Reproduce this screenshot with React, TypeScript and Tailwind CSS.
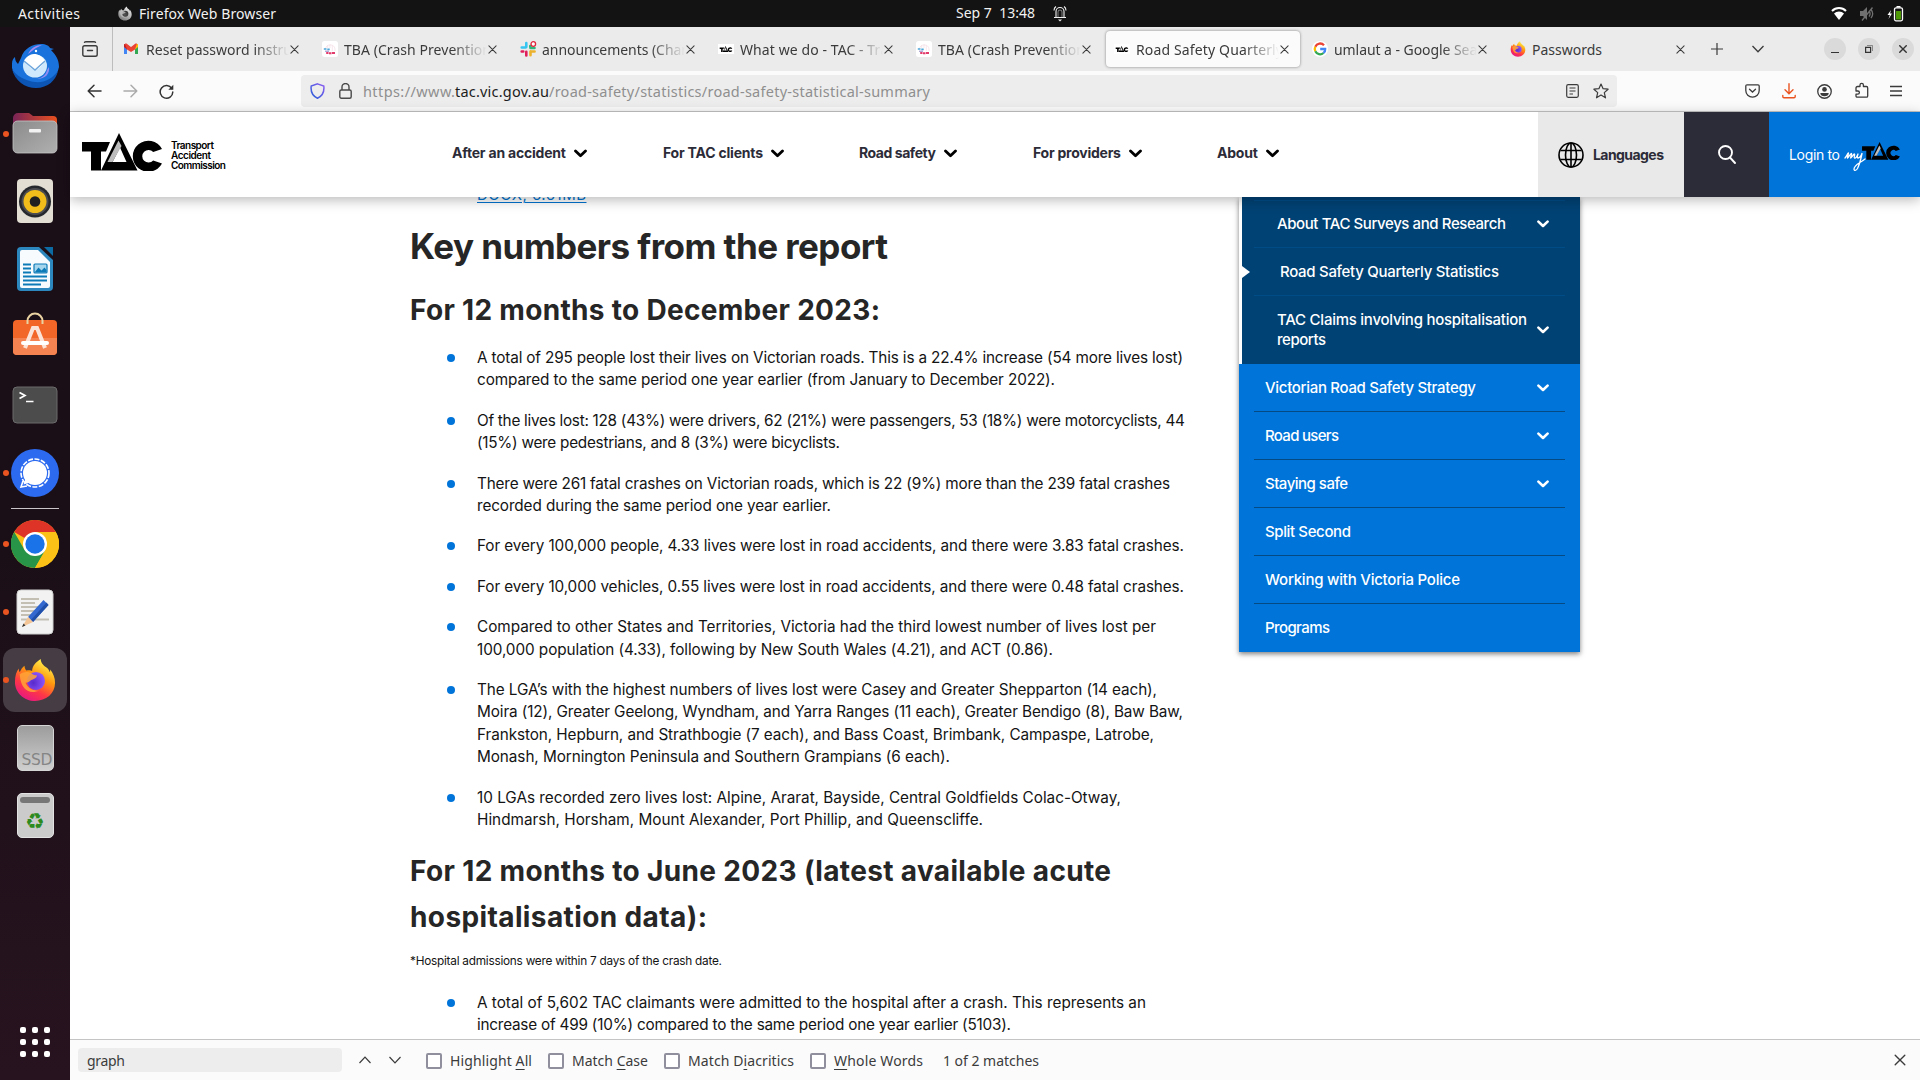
import { useLayoutEffect, useRef, useState } from 'react';
import type { ReactNode } from 'react';

/** Text run whose tracking is adjusted so that it fills `w` pixels. */
function Fit({ w, children, className = '' }: { w: number; children: ReactNode; className?: string }) {
  const ref = useRef<HTMLSpanElement>(null);
  const [ls, setLs] = useState(0);
  useLayoutEffect(() => {
    const el = ref.current;
    if (!el) return;
    const n = (el.textContent || '').length;
    setLs((w - el.getBoundingClientRect().width) / Math.max(1, n - 1));
  }, [w]);
  return (
    <span ref={ref} className={`inline-block whitespace-nowrap ${className}`} style={{ letterSpacing: `${ls}px`, marginRight: `${-ls}px` }}>
      {children}
    </span>
  );
}

type IconProps = { className?: string };

function Close({ className = '' }: IconProps) {
  return (
    <svg viewBox="0 0 10 10" className={`shrink-0 ${className}`} fill="none" stroke="currentColor" strokeWidth="1.15" strokeLinecap="round">
      <path d="M1 1l8 8M9 1l-8 8" />
    </svg>
  );
}

function Chev({ className = '' }: IconProps) {
  return (
    <svg viewBox="0 0 12 8" className={`shrink-0 ${className}`} fill="none" stroke="currentColor" strokeWidth="2.6" strokeLinecap="round" strokeLinejoin="round">
      <path d="M1.4 1.6L6 6l4.6-4.4" />
    </svg>
  );
}

function TacMark({ className = '' }: IconProps) {
  return (
    <svg viewBox="0 0 80 38" className={`shrink-0 ${className}`}>
      <path d="M0 9h28l-4 9.500h-5V37.500H9v-19H0z" fill="#000" />
      <path fillRule="evenodd" d="M37 0L55.500 37.500H19zM38 14.500l-7.500 14.500h14z" fill="#000" />
      <path d="M36.500 7.500l3 5.500-9 16h-5z" fill="#bdbdbd" />
      <path d="M80 16A15.500 15.500 0 1 0 80 30.500l-8.800-3a6.300 6.300 0 1 1 0-8.500z" fill="#000" />
    </svg>
  );
}

function FirefoxIcon({ className = '', mono = false }: IconProps & { mono?: boolean }) {
  const id = mono ? 'fm' : 'fc';
  return (
    <svg viewBox="0 0 44 46" className={`shrink-0 ${className}`}>
      <defs>
        <linearGradient id={`${id}a`} x1="0.8" y1="0" x2="0.25" y2="1">
          <stop offset="0.05" stopColor={mono ? '#e8e8e8' : '#fff44f'} />
          <stop offset="0.4" stopColor={mono ? '#c4c4c4' : '#ff980e'} />
          <stop offset="0.7" stopColor={mono ? '#a0a0a0' : '#ff3647'} />
          <stop offset="1" stopColor={mono ? '#777' : '#e31587'} />
        </linearGradient>
        <radialGradient id={`${id}b`} cx="0.35" cy="0.6" r="0.7">
          <stop offset="0" stopColor={mono ? '#555' : '#592acb'} />
          <stop offset="1" stopColor={mono ? '#333' : '#9059ff'} />
        </radialGradient>
      </defs>
      <path d="M28 1c0 4 3 7 6 9 2 1.500 3 3 3.500 5 .4-1 .5-2 .5-3 3 4 5 8.500 5 14 0 11.500-9.500 19-21 19S1 36 1 25c0-6 1.500-11 4-14 0 2 .5 3 1 4 1-3 3-5.500 5-7 0 2 1 4 2 5 3-.5 5 0 6 .5 0-5 4-9.500 9-12.500z" fill={`url(#${id}a)`} />
      <circle cx="23" cy="24" r="9.5" fill={`url(#${id}b)`} />
      <path d="M6 17c4-3 9-3 12-1 2 2 4 2 6 2 0 3-3 4-6 5-1 1-3 3-6 3 2 5 8 9 14 8-8 4-19 1-20-17z" fill={mono ? '#bbb' : '#ffa436'} opacity=".85" />
    </svg>
  );
}

function GmailIcon() {
  return (
    <svg viewBox="0 0 14 12" className="h-3 w-3.5">
      <path d="M0 1.500V11h3V5z" fill="#4285f4" />
      <path d="M14 1.500V11h-3V5z" fill="#34a853" />
      <path d="M11 1.500L14 1v3l-3 2.500z" fill="#fbbc04" />
      <path d="M0 1l3 .5V6.500L0 4z" fill="#c5221f" />
      <path d="M1 .5h1.500L7 4 11.500.5H13L11 6.500H11L7 9 3 6.500z" fill="#ea4335" />
    </svg>
  );
}

function TbaIcon() {
  return (
    <svg viewBox="0 0 16 16" className="size-4">
      <rect width="16" height="16" rx="2.500" fill="#fff" />
      <path d="M3.500 8a4.800 4.800 0 0 1 9.500 0v2M8 3.500V7M5.700 4.500V7M10.300 4.500V10" fill="none" stroke="#f3dbe4" strokeWidth=".7" />
      <path d="M1.800 8h2.700M5.300 8.300h2.400" fill="none" stroke="#4aa5d8" strokeWidth="1.700" />
      <path d="M3 10.200h4" fill="none" stroke="#8d86c4" strokeWidth="1" />
      <path d="M4.200 12h2.300M7 12.200h2.500M10 12h3" fill="none" stroke="#e23a6b" strokeWidth="2" />
    </svg>
  );
}

function SlackIcon() {
  return (
    <svg viewBox="0 0 17 16" className="h-4 w-[17px]">
      <g strokeWidth="2.600" strokeLinecap="round">
        <path d="M6.300 2v4M1.700 6.500h4" stroke="#36c5f0" />
        <path d="M10.300 6v-1M10.500 7h4" stroke="#2eb67d" />
        <path d="M10.500 10.500v3.800M10.600 10.500h4" stroke="#ecb22e" />
        <path d="M6.300 10.700v3.700M1.700 10.500h1.600" stroke="#e01e5a" />
      </g>
      <circle cx="13.300" cy="3" r="2.300" fill="#fff" stroke="#e0263c" strokeWidth="1.300" />
    </svg>
  );
}

function GoogleIcon() {
  return (
    <svg viewBox="0 0 16 16" className="size-4">
      <circle cx="8" cy="8" r="8" fill="#fff" />
      <g fill="none" strokeWidth="2.300">
        <path d="M12 4.200A5.300 5.300 0 0 0 3.300 5.700" stroke="#ea4335" />
        <path d="M3.300 5.700a5.300 5.300 0 0 0 0 4.600" stroke="#fbbc05" />
        <path d="M3.300 10.300a5.300 5.300 0 0 0 8.200 1.700" stroke="#34a853" />
        <path d="M11.500 12A5 5 0 0 0 13.200 8H8.200" stroke="#4285f4" />
      </g>
    </svg>
  );
}

function TacFav() {
  return (
    <span className="flex h-2.5 w-4 items-center justify-center bg-white">
      <TacMark className="h-1.5 w-3.5" />
    </span>
  );
}

const tabs: { icon: ReactNode; text: string; w: number; active?: boolean; short?: boolean }[] = [
  { icon: <GmailIcon />, text: 'Reset password instru', w: 146 },
  { icon: <TbaIcon />, text: 'TBA (Crash Prevention', w: 147 },
  { icon: <SlackIcon />, text: 'announcements (Chan', w: 148 },
  { icon: <TacFav />, text: 'What we do - TAC - Tra', w: 148 },
  { icon: <TbaIcon />, text: 'TBA (Crash Prevention', w: 147 },
  { icon: <TacFav />, text: 'Road Safety Quarterly', w: 147, active: true },
  { icon: <GoogleIcon />, text: 'umlaut a - Google Sear', w: 149 },
  { icon: <FirefoxIcon className="size-4" />, text: 'Passwords', w: 70, short: true },
];

function TopBar() {
  return (
    <div className="flex h-[27px] shrink-0 items-center bg-[#131313] pl-[18px] pr-4 text-sm text-[#f2f2f2]">
      <div className="flex w-[938px] items-center">
        <Fit w={62}>Activities</Fit>
        <FirefoxIcon mono className="ml-[38px] mr-[7px] h-[15px] w-3.5" />
        <Fit w={137}>Firefox Web Browser</Fit>
      </div>
      <Fit w={79} className="-mt-px whitespace-pre">{'Sep 7  13:48'}</Fit>
      <svg viewBox="0 0 14 17" className="ml-[18px] h-[17px] w-3.5" fill="none" stroke="#f2f2f2" strokeWidth="1.1">
        <path d="M1 12.500h12M3 12V6.500a4 4 0 0 1 8 0V12M3 1.500C1.800 2.300 1 3.500 1 5.500M11 1.500c1.200.8 2 2 2 4" />
        <path d="M5 12V7a2 2 0 0 1 4 0v5" strokeWidth=".5" />
        <path d="M5 14.500h4l-2 2z" fill="#f2f2f2" stroke="none" />
      </svg>
      <div className="ml-auto flex items-center gap-3">
        <svg viewBox="0 0 16 13" className="h-[13px] w-4">
          <path d="M8 13L3 6.500a7 7 0 0 1 10 0z" fill="#fff" />
          <path d="M1 4a9.800 9.800 0 0 1 14 0" fill="none" stroke="#fff" strokeWidth="2" />
        </svg>
        <svg viewBox="0 0 16 15" className="h-[15px] w-4" fill="none" stroke="#707070" strokeWidth="1.300">
          <path d="M1 5h3l4-4v13l-4-4H1z" fill="#707070" stroke="none" />
          <path d="M10 5c1.200 1.500 1.200 4 0 5.500M12 3.500c2 2.500 2 6 0 8.500M13.500 1.500L3 14.500" />
        </svg>
        <svg viewBox="0 0 17 16" className="h-4 w-[17px]">
          <path d="M4 4L.5 9h2.300L1.500 13 5 7.500H3z" fill="#fff" />
          <rect x="7.500" y="1.800" width="8" height="13" rx="1.500" fill="none" stroke="#fff" strokeWidth="1.300" />
          <path d="M9.500 0h4v1.500h-4z" fill="#fff" />
          <path d="M9 5h5v8.500H9z" fill="#4e9a06" />
        </svg>
      </div>
    </div>
  );
}

function TabBar() {
  return (
    <div className="flex h-11 shrink-0 items-center bg-[#ebebeb] text-sm text-[#3b3b3b]">
      <div className="flex h-full w-[43px] shrink-0 items-center border-r border-[#bdbdbd] pl-3">
        <svg viewBox="0 0 16 16" className="size-4" fill="none" stroke="#3b3b3b" strokeWidth="1.400" strokeLinecap="round">
          <rect x=".8" y="4.800" width="14.400" height="10.400" rx="1.800" />
          <path d="M2.500 1.200C3 .8 3.200.8 4 .8h8c.8 0 1 0 1.500.4M5.500 9.500h5" />
        </svg>
      </div>
      <div className="-ml-px flex shrink-0 items-center gap-1 pl-1">
        {tabs.map((t, i) => (
          <div
            key={i}
            className={
              t.active
                ? 'flex h-9 w-[194px] items-center rounded bg-[#fbfbfb] pl-2 shadow-[0_0_3px_rgba(0,0,0,0.45)]'
                : 'flex h-9 w-[194px] items-center rounded pl-2'
            }
          >
            <span className="flex w-[22px] items-center">{t.icon}</span>
            <span
              className={
                t.short
                  ? 'w-[143px] overflow-hidden pt-0.5'
                  : 'w-[143px] overflow-hidden pt-0.5 [mask-image:linear-gradient(to_right,#000_108px,transparent_143px)]'
              }
            >
              <Fit w={t.w}>{t.text}</Fit>
            </span>
            <Close className="ml-px size-[9px]" />
          </div>
        ))}
      </div>
      <svg viewBox="0 0 12 12" className="ml-[15px] size-3 shrink-0" stroke="#3b3b3b" strokeWidth="1.200">
        <path d="M6 0v12M0 6h12" />
      </svg>
      <svg viewBox="0 0 12 8" className="ml-[29px] h-2 w-3 shrink-0" fill="none" stroke="#3b3b3b" strokeWidth="1.300">
        <path d="M.5 1L6 6.800 11.500 1" />
      </svg>
      <div className="ml-auto flex gap-3 pr-1.5">
        <span className="flex size-[22px] items-center justify-center rounded-full bg-[#dadada]">
          <span className="mt-1.5 h-px w-2 bg-[#333]" />
        </span>
        <span className="flex size-[22px] items-center justify-center rounded-full bg-[#dadada]">
          <svg viewBox="0 0 8 8" className="size-2" fill="none" stroke="#333">
            <path d="M.6 2.400h5v5h-5z" strokeWidth="1.200" />
            <path d="M2 .5h5.500V6" strokeWidth=".8" opacity=".6" />
          </svg>
        </span>
        <span className="flex size-[22px] items-center justify-center rounded-full bg-[#dadada] text-[#333]">
          <svg viewBox="0 0 8 8" className="size-2" stroke="#333" strokeWidth="1.400">
            <path d="M.3.3l7.400 7.400M7.700.3L.3 7.700" />
          </svg>
        </span>
      </div>
    </div>
  );
}

function Toolbar() {
  return (
    <div className="flex h-[41px] shrink-0 items-center border-b border-[#c4c4c4] bg-[#fbfbfb] text-[#3b3b3b]">
      <div className="flex w-[231px] shrink-0 items-center gap-[21px] pl-[17px]">
        <svg viewBox="0 0 15 14" className="h-3.5 w-[15px]" fill="none" stroke="#333" strokeWidth="1.500" strokeLinecap="round" strokeLinejoin="round">
          <path d="M14 7H1.500M7 1.200L1.200 7 7 12.800" />
        </svg>
        <svg viewBox="0 0 15 14" className="h-3.5 w-[15px]" fill="none" stroke="#ababab" strokeWidth="1.500" strokeLinecap="round" strokeLinejoin="round">
          <path d="M1 7h12.500M8 1.200L13.800 7 8 12.800" />
        </svg>
        <svg viewBox="0 0 15 15" className="size-[15px]" fill="none" stroke="#333" strokeWidth="1.500" strokeLinecap="round">
          <path d="M12.800 4.500A6.300 6.300 0 1 0 13.800 8" />
          <path d="M14.300.8v5h-5z" fill="#333" stroke="none" />
        </svg>
      </div>
      <div className="flex h-8 w-[1316px] shrink-0 items-center rounded bg-[#ededed] pl-[9px] pr-2">
        <svg viewBox="0 0 15 16" className="h-4 w-[15px]" fill="none" strokeWidth="1.500">
          <defs>
            <linearGradient id="sh" x1="0" y1="1" x2="1" y2="0">
              <stop offset="0" stopColor="#2a60d8" />
              <stop offset="1" stopColor="#8a5cf0" />
            </linearGradient>
          </defs>
          <path d="M7.500.9L13.800 3c.6 5-1.500 10-6.300 12.200C2.700 13 .6 8 1.200 3z" stroke="url(#sh)" />
        </svg>
        <svg viewBox="0 0 13 16" className="ml-[14px] h-4 w-[13px]" fill="none" stroke="#4a4a4a" strokeWidth="1.400">
          <rect x=".8" y="7" width="11.400" height="8.200" rx="1.500" />
          <path d="M3 7V4a3.500 3.500 0 0 1 7 0v3" />
        </svg>
        <span className="ml-[11px] mt-0.5 flex text-[14.5px] text-[#8f8f8f]">
          <Fit w={92}>https://www.</Fit>
          <Fit w={94} className="text-[#1c1c1c]">tac.vic.gov.au</Fit>
          <Fit w={381}>/road-safety/statistics/road-safety-statistical-summary</Fit>
        </span>
        <svg viewBox="0 0 13 14" className="ml-auto h-3.5 w-[13px]" fill="none" stroke="#3b3b3b" strokeWidth="1.200">
          <rect x=".7" y=".7" width="11.600" height="12.600" rx="1.500" />
          <path d="M3.500 4h6M3.500 7h6M3.500 10h3.500" />
        </svg>
        <svg viewBox="0 0 16 16" className="ml-[14px] size-4" fill="none" stroke="#3b3b3b" strokeWidth="1.200" strokeLinejoin="round">
          <path d="M8 1l2.100 4.700 5 .5-3.800 3.400 1.200 5.200L8 12.100l-4.500 2.700 1.200-5.200L.9 6.200l5-.5z" />
        </svg>
      </div>
      <div className="ml-auto flex items-center gap-[21.500px] pr-[18px]">
        <svg viewBox="0 0 15 14" className="h-3.5 w-[15px]" fill="none" stroke="#3b3b3b" strokeWidth="1.300" strokeLinecap="round">
          <path d="M2 .8h11c.8 0 1.200.4 1.200 1.200v4.500a6.700 6.700 0 0 1-13.400 0V2C.8 1.200 1.200.8 2 .8zM4.500 5.300l3 2.800 3-2.800" />
        </svg>
        <svg viewBox="0 0 14 16" className="h-4 w-3.5" fill="none" stroke="#ea5420" strokeWidth="1.400" strokeLinecap="round">
          <path d="M7 .8v9.700M3 6.800l4 3.900 4-3.900M.8 12.500v1c0 .8.400 1.200 1.200 1.200h10c.8 0 1.200-.4 1.200-1.200v-1" />
        </svg>
        <svg viewBox="0 0 16 16" className="size-[15px]">
          <circle cx="8" cy="8" r="7.200" fill="none" stroke="#3b3b3b" strokeWidth="1.400" />
          <circle cx="8" cy="5.800" r="2.500" fill="#3b3b3b" />
          <path d="M3.500 9.500h9c0 2.200-2 3.500-4.500 3.500S3.500 11.700 3.500 9.500z" fill="#3b3b3b" />
        </svg>
        <svg viewBox="0 0 15 16" className="-mt-0.5 h-4 w-[15px]" fill="none" stroke="#3b3b3b" strokeWidth="1.300" strokeLinejoin="round">
          <path d="M2 8V6c0-1 .5-1.500 1.500-1.500H6V3a1.700 1.700 0 0 1 3.400 0v1.500h3c.8 0 1.300.5 1.300 1.500v8c0 .8-.5 1.200-1.300 1.200H3.500c-1 0-1.500-.4-1.500-1.200v-1.800h1.800a1.600 1.600 0 0 0 0-3.200H2z" />
        </svg>
        <svg viewBox="0 0 12 12" className="size-3" stroke="#3b3b3b" strokeWidth="1.400">
          <path d="M0 1.500h12M0 6h12M0 10.500h12" />
        </svg>
      </div>
    </div>
  );
}

function NavItem({ text, w }: { text: string; w: number }) {
  return (
    <div className="flex items-center gap-2">
      <Fit w={w}>{text}</Fit>
      <Chev className="h-[9px] w-[13px] text-black" />
    </div>
  );
}

function SiteHeader() {
  return (
    <header className="relative z-10 flex h-[85px] shrink-0 items-center bg-white pl-3 font-[Inter,sans-serif] text-sm font-bold text-[#2c2c38] shadow-[0_3px_12px_rgba(0,0,0,0.28)]">
      <TacMark className="mt-[-5px] h-[38px] w-20" />
      <div className="ml-[9px] mt-px flex w-[281px] flex-col text-[10px] font-semibold leading-[10.3px] text-black">
        <Fit w={43} className="self-start">Transport</Fit>
        <Fit w={40} className="self-start">Accident</Fit>
        <Fit w={55} className="self-start">Commission</Fit>
      </div>
      <div className="mt-[-3px] flex items-center gap-[76px]">
        <NavItem text="After an accident" w={114} />
        <NavItem text="For TAC clients" w={100} />
        <div className="-ml-px"><NavItem text="Road safety" w={77} /></div>
        <NavItem text="For providers" w={88} />
        <div className="-ml-px"><NavItem text="About" w={41} /></div>
      </div>
      <div className="ml-auto flex h-full w-[146px] items-center bg-[#e9e9e9] pl-5">
        <svg viewBox="0 0 26 26" className="size-[26px]" fill="none" stroke="#000" strokeWidth="1.600">
          <circle cx="13" cy="13" r="12" />
          <ellipse cx="13" cy="13" rx="5.500" ry="12" />
          <path d="M13 1v24M2.500 8.500h21M2.500 17.500h21" />
        </svg>
        <Fit w={71} className="ml-[9px]">Languages</Fit>
      </div>
      <div className="flex h-full w-[85px] items-center justify-center bg-[#2c2c38]">
        <svg viewBox="0 0 18 19" className="h-[19px] w-[18px]" fill="none" stroke="#fff" strokeWidth="1.900" strokeLinecap="round">
          <circle cx="7.500" cy="7.500" r="6.500" />
          <path d="M12 12.500l5 5.500" />
        </svg>
      </div>
      <div className="flex h-full w-[151px] items-center bg-[#0074d9] pl-5 font-normal text-white">
        <Fit w={51} className="mt-px">Login to</Fit>
        <svg viewBox="0 0 22 22" className="-mr-1 ml-1 mt-3 h-[22px] w-[22px]" fill="none" stroke="#fff" strokeWidth="1.300" strokeLinecap="round" strokeLinejoin="round">
          <path d="M1 8C3 6 4 2.500 4.500 3c.4.500-1.300 3.500-1 5C5 6.500 6.500 3.500 7.500 3.500c.8.500-1 3-.8 4.500C8 7 9.500 4 10.500 4c.8.500-1 3.500 0 4 1.200.3 2.500-1.500 3.500-4-.8 2-1 4 0 4 1.500 0 3-2 4-4.500-1 5-2.500 11-4.500 15-1.500 2.500-3.500 2.500-3.500.5 0-4 6-6 11-10" />
        </svg>
        <TacMark className="-mt-2 h-[18px] w-[38px]" />
      </div>
    </header>
  );
}

const findings: [string, number][][] = [
  [
    ['A total of 295 people lost their lives on Victorian roads. This is a 22.4% increase (54 more lives lost)', 706],
    ['compared to the same period one year earlier (from January to December 2022).', 578],
  ],
  [
    ['Of the lives lost: 128 (43%) were drivers, 62 (21%) were passengers, 53 (18%) were motorcyclists, 44', 708],
    ['(15%) were pedestrians, and 8 (3%) were bicyclists.', 363],
  ],
  [
    ['There were 261 fatal crashes on Victorian roads, which is 22 (9%) more than the 239 fatal crashes', 693],
    ['recorded during the same period one year earlier.', 354],
  ],
  [['For every 100,000 people, 4.33 lives were lost in road accidents, and there were 3.83 fatal crashes.', 707]],
  [['For every 10,000 vehicles, 0.55 lives were lost in road accidents, and there were 0.48 fatal crashes.', 707]],
  [
    ['Compared to other States and Territories, Victoria had the third lowest number of lives lost per', 679],
    ['100,000 population (4.33), following by New South Wales (4.21), and ACT (0.86).', 576],
  ],
  [
    ['The LGA’s with the highest numbers of lives lost were Casey and Greater Shepparton (14 each),', 680],
    ['Moira (12), Greater Geelong, Wyndham, and Yarra Ranges (11 each), Greater Bendigo (8), Baw Baw,', 706],
    ['Frankston, Hepburn, and Strathbogie (7 each), and Bass Coast, Brimbank, Campaspe, Latrobe,', 677],
    ['Monash, Mornington Peninsula and Southern Grampians (6 each).', 473],
  ],
  [
    ['10 LGAs recorded zero lives lost: Alpine, Ararat, Bayside, Central Goldfields Colac-Otway,', 644],
    ['Hindmarsh, Horsham, Mount Alexander, Port Phillip, and Queenscliffe.', 506],
  ],
];

const hospital: [string, number][][] = [
  [
    ['A total of 5,602 TAC claimants were admitted to the hospital after a crash. This represents an', 669],
    ['increase of 499 (10%) compared to the same period one year earlier (5103).', 534],
  ],
];

function Bullets({ items }: { items: [string, number][][] }) {
  return (
    <ul className="flex flex-col gap-[18px] text-[15.300px] leading-[22.4px] text-[#141414]">
      {items.map((lines, i) => (
        <li key={i} className="flex pl-[37px]">
          <span className="mr-[22px] mt-[7px] size-2 shrink-0 rounded-full bg-[#0074d9]" />
          <div className="flex flex-col items-start">
            {lines.map(([t, w]) => (
              <Fit key={t} w={w}>{t}</Fit>
            ))}
          </div>
        </li>
      ))}
    </ul>
  );
}

function Article() {
  return (
    <article className="flex w-[829px] shrink-0 flex-col items-start text-[#262626]">
      <a className="-mt-[13px] ml-[67px] text-[15px] leading-[22px] text-[#0072ce]">
        <Fit w={109} className="underline decoration-1 underline-offset-2">DOCX, 6.61MB</Fit>
      </a>
      <h2 className="mt-[17px] text-[35px] font-bold leading-[46px]">
        <Fit w={478}>Key numbers from the report</Fit>
      </h2>
      <h3 className="mb-[14px] mt-[18px] text-[28px] font-bold leading-[46px]">
        <Fit w={470}>For 12 months to December 2023:</Fit>
      </h3>
      <Bullets items={findings} />
      <h3 className="mt-4 flex flex-col items-start text-[28px] font-bold leading-[46px]">
        <Fit w={701}>For 12 months to June 2023 (latest available acute</Fit>
        <Fit w={297}>hospitalisation data):</Fit>
      </h3>
      <p className="mb-[20px] mt-[10px] text-[11.8px] leading-[22px] text-[#141414]">
        <Fit w={312}>*Hospital admissions were within 7 days of the crash date.</Fit>
      </p>
      <Bullets items={hospital} />
    </article>
  );
}

const blueItems: [string, number, boolean][] = [
  ['Victorian Road Safety Strategy', 211, true],
  ['Road users', 74, true],
  ['Staying safe', 83, true],
  ['Split Second', 86, false],
  ['Working with Victoria Police', 195, false],
  ['Programs', 65, false],
];

function Sidebar() {
  return (
    <aside className="h-[455px] w-[341px] shrink-0 text-[15px] font-medium leading-5 text-white shadow-[0_2px_5px_rgba(0,0,0,0.5)]">
      <div className="border-l-[3px] border-white bg-[#004274]">
        <div className="ml-3 mr-[15px] h-1 border-b border-[#004c87]" />
        <div className="ml-3 mr-[15px] flex h-[47px] items-center justify-between border-b border-[#004c87] pl-[23px] pr-4">
          <Fit w={229}>About TAC Surveys and Research</Fit>
          <Chev className="h-2 w-3" />
        </div>
        <div className="flex h-12 items-center">
          <span className="h-0 w-0 border-y-[6px] border-l-8 border-y-transparent border-l-white" />
          <div className="ml-1 mr-[15px] flex h-full flex-1 items-center border-b border-[#004c87] pl-[26px]">
            <Fit w={219}>Road Safety Quarterly Statistics</Fit>
          </div>
        </div>
        <div className="ml-3 mr-[15px] flex h-[68px] items-center justify-between pb-px pl-[23px] pr-4">
          <div className="flex flex-col items-start">
            <Fit w={250}>TAC Claims involving hospitalisation</Fit>
            <Fit w={49}>reports</Fit>
          </div>
          <Chev className="h-2 w-3" />
        </div>
      </div>
      <div className="bg-[#0074d9] pl-[15px] pr-[15px]">
        {blueItems.map(([t, w, c], i) => (
          <div
            key={t}
            className={
              i < 5
                ? 'flex h-12 items-center justify-between border-b border-[#064a84] pl-[11px] pr-4'
                : 'flex h-12 items-center justify-between pl-[11px] pr-4'
            }
          >
            <Fit w={w}>{t}</Fit>
            {c && <Chev className="h-2 w-3" />}
          </div>
        ))}
      </div>
    </aside>
  );
}

function Check({ before = '', u, after, w }: { before?: string; u: string; after: string; w: number }) {
  return (
    <label className="flex items-center gap-2">
      <span className="size-4 rounded-[2px] border-2 border-[#8f8f9d] bg-white" />
      <Fit w={w}>
        {before}
        <span className="underline underline-offset-[3px]">{u}</span>
        {after}
      </Fit>
    </label>
  );
}

function FindBar() {
  return (
    <div className="flex h-[41px] shrink-0 items-center border-t border-[#c4c4c4] bg-[#fbfbfb] pl-2 pr-3.5 text-sm text-[#3b3b3b]">
      <div className="flex h-6 w-[264px] items-center rounded bg-[#ededed] pl-[9px] pt-px">
        <Fit w={38}>graph</Fit>
      </div>
      <svg viewBox="0 0 12 8" className="ml-[17px] h-2 w-3" fill="none" stroke="#3b3b3b" strokeWidth="1.200">
        <path d="M.5 7L6 1.200 11.500 7" />
      </svg>
      <svg viewBox="0 0 12 8" className="ml-[18px] mr-[25px] h-2 w-3" fill="none" stroke="#3b3b3b" strokeWidth="1.200">
        <path d="M.5 1L6 6.800 11.500 1" />
      </svg>
      <div className="flex items-center gap-4 pt-px">
        <Check before="Highlight " u="A" after="ll" w={82} />
        <Check before="Match " u="C" after="ase" w={76} />
        <Check before="Match D" u="i" after="acritics" w={106} />
        <Check u="W" after="hole Words" w={89} />
      </div>
      <Fit w={96} className="ml-5 mt-px">1 of 2 matches</Fit>
      <Close className="ml-auto size-3" />
    </div>
  );
}

function ThunderbirdIcon() {
  return (
    <svg viewBox="0 0 48 48" className="size-12">
      <path d="M1 22c0-4 1.500-6 3-7 0 3 1 5 3 7l3-6C13 6 22 2 30 2c5 0 8 2 9 4l4 1-3 1c5 5 8 10 8 17A24 23 0 0 1 1 26z" fill="#1a73dc" />
      <path d="M17 12c3-6 8-9 14-9l-6 3c-3 2-5 4-8 6z" fill="#a78bf0" />
      <path d="M1 27c3 12 13 19 24 19 12 0 20-8 22-17-6 8-14 12-23 11S5 34 1 27z" fill="#0c55b5" />
      <ellipse cx="24" cy="24" rx="12" ry="11.500" fill="#cfe8fb" />
      <path d="M13 19c4 5 7 8 11 9 4-1 7-4 10-9-3-5-7-7-11-7s-8 3-10 7z" fill="#fff" />
      <path d="M13 19l11 9 10-9" fill="none" stroke="#6ea6dc" strokeWidth="1.400" />
      <circle cx="25" cy="9" r="1.200" fill="#fff" />
      <path d="M36 28c-1 5-5 8-10 9 8 0 13-5 12-12z" fill="#8f8df2" />
    </svg>
  );
}

function FilesIcon() {
  return (
    <svg viewBox="0 0 46 42" className="-mt-0.5 h-[42px] w-[46px]">
      <defs>
        <linearGradient id="fl"><stop stopColor="#7a2457" /><stop offset="1" stopColor="#e9501f" /></linearGradient>
        <linearGradient id="fg" x2="1" y2="1"><stop stopColor="#8b8b8b" /><stop offset="1" stopColor="#b0b0b0" /></linearGradient>
      </defs>
      <path d="M1 6a5 5 0 0 1 5-5h11l4 3h20a4 4 0 0 1 4 4v12H1z" fill="url(#fl)" />
      <rect x="1" y="9" width="44" height="32" rx="4.500" fill="url(#fg)" stroke="#c6c6c6" strokeWidth=".8" />
      <rect x="17" y="17" width="12" height="3.500" rx="1" fill="#f2f2f2" />
    </svg>
  );
}

function RhythmboxIcon() {
  return (
    <svg viewBox="0 0 38 46" className="h-[46px] w-[38px]">
      <rect x="1" y="1" width="36" height="44" rx="4" fill="#e2ded3" />
      <circle cx="19" cy="23.500" r="16" fill="#25282d" />
      <circle cx="19" cy="23.500" r="13.500" fill="#4b4d50" />
      <circle cx="19" cy="23.500" r="11.500" fill="#f0bd1b" />
      <circle cx="19" cy="23.500" r="5.300" fill="#202020" />
    </svg>
  );
}

function WriterIcon() {
  return (
    <svg viewBox="0 0 38 46" className="h-[46px] w-[38px]">
      <path d="M5 1h18l14 13v27a4 4 0 0 1-4 4H5a4 4 0 0 1-4-4V5a4 4 0 0 1 4-4z" fill="#2b87bd" />
      <path d="M6 4h16l12 12v24a2 2 0 0 1-2 2H6a2 2 0 0 1-2-2V6a2 2 0 0 1 2-2z" fill="#f7fbfd" />
      <path d="M28 1h9v9z" fill="#0d6ba3" />
      <path d="M7 18.500h8M7 22.500h8M7 26.500h8M7 30.500h24M7 34.500h24M7 38.500h18" stroke="#0d7ab8" strokeWidth="1.900" />
      <rect x="18" y="18" width="13" height="9" rx="1" fill="#a6d5ee" stroke="#0d7ab8" strokeWidth="1.200" />
      <path d="M18.500 26.500l4-5 3 3 3-3 2 2.500v2.500z" fill="#0d7ab8" />
    </svg>
  );
}

function SoftwareIcon() {
  return (
    <svg viewBox="0 0 46 44" className="-mt-1.5 h-11 w-[46px]">
      <path d="M15.500 12V9a7.500 7.500 0 0 1 15 0v3" fill="none" stroke="#ead3a3" strokeWidth="2" />
      <rect x="1" y="8" width="44" height="35" rx="4" fill="#f26627" />
      <path d="M1 26h44v13a4 4 0 0 1-4 4H5a4 4 0 0 1-4-4z" fill="#f58352" />
      <path d="M13 36l8-20h4l8 20" fill="none" stroke="#fbe3d8" strokeWidth="4" />
      <path d="M11 31h24" fill="none" stroke="#fff" strokeWidth="4" strokeLinecap="round" />
      <path d="M15.500 8v4M30.500 8v4" stroke="#ead3a3" strokeWidth="2" />
    </svg>
  );
}

function TerminalIcon() {
  return (
    <svg viewBox="0 0 46 38" className="h-[38px] w-[46px]">
      <rect x="1" y="1" width="44" height="36" rx="4" fill="#4c4c4c" stroke="#6b6b6b" />
      <path d="M7.500 6.500l5.500 3-5.500 3M14 15.500h7.500" fill="none" stroke="#fff" strokeWidth="1.700" />
    </svg>
  );
}

function SignalIcon() {
  return (
    <svg viewBox="0 0 48 48" className="size-12">
      <circle cx="24" cy="24" r="24" fill="#2c6bf0" />
      <circle cx="24" cy="24" r="14" fill="none" stroke="#fff" strokeWidth="1.600" strokeDasharray="5 1.500" />
      <path d="M12 32l-2 6 6-1" fill="none" stroke="#fff" strokeWidth="1.600" />
      <circle cx="24" cy="24" r="12" fill="#fff" />
      <path d="M15 28l-2.500 7.500L21 33z" fill="#fff" />
    </svg>
  );
}

function ChromeIcon() {
  return (
    <svg viewBox="0 0 48 48" className="size-12">
      <circle cx="24" cy="24" r="24" fill="#fbc116" />
      <path d="M24 24L3.200 12A24 24 0 0 1 44.800 12H24z" fill="#dd3427" />
      <path d="M24 48A24 24 0 0 1 3.200 12l10.400 18L24 36l10.400-6z" fill="#289447" />
      <path d="M24 12h20.800A24 24 0 0 1 24 48l10.400-18z" fill="#fbc116" />
      <circle cx="24" cy="24" r="12" fill="#fff" />
      <circle cx="24" cy="24" r="9.700" fill="#1a73e8" />
    </svg>
  );
}

function EditorIcon() {
  return (
    <svg viewBox="0 0 38 46" className="h-[46px] w-[38px]">
      <rect x="1" y="1" width="36" height="44" rx="4" fill="#f2f2f2" stroke="#cfcfcf" />
      <path d="M5 10h18M5 14h14M5 18h20M5 22h14M5 26h12M5 30.500h28" stroke="#c3c0b3" strokeWidth="1.800" />
      <path d="M12 28L27.500 11l5 5L17 33z" fill="#3268cf" />
      <path d="M15 31L30.500 13.500l2 2.500L17 33z" fill="#1f4fa8" />
      <path d="M12 28l5 5-11 5z" fill="#f3c596" />
      <path d="M7.500 34.500L6 38l3.500-1.500z" fill="#333" />
    </svg>
  );
}

function SsdIcon() {
  return (
    <div className="flex h-[46px] w-[37px] items-end justify-end overflow-hidden rounded-[5px] border border-[#d5d5d5] bg-gradient-to-b from-[#9c9c9c] to-[#cfcfcf] font-['DejaVu_Sans',sans-serif] text-[15.5px] leading-[20px] text-[#858585]">
      <Fit w={31}>SSD</Fit>
    </div>
  );
}

function TrashIcon() {
  return (
    <div className="flex h-[45px] w-[37px] flex-col items-center rounded-[5px] border border-[#e3e3e3] bg-[#cbcbcb] pt-[3px]">
      <span className="h-1.5 w-[30px] rounded-full bg-[#777]" />
      <span className="mt-[7px] font-['DejaVu_Sans',sans-serif] text-[22px] leading-6 text-[#2c8a1e]">♻</span>
    </div>
  );
}

function DockCell({ children, dot = false, active = false }: { children: ReactNode; dot?: boolean; active?: boolean }) {
  return (
    <div className="relative flex h-[67.8px] w-full items-center justify-center">
      <div className={active ? 'flex size-16 items-center justify-center rounded-xl bg-[#463c43]' : 'flex size-16 items-center justify-center'}>
        {children}
      </div>
      {dot && <span className="absolute left-[3px] size-1.5 rounded-full bg-[#e95420]" />}
    </div>
  );
}

function Dock() {
  return (
    <nav className="flex w-[70px] shrink-0 flex-col items-center bg-gradient-to-b from-[#1a0e17] via-[#1b0f17] to-[#27131f] pt-[5px]">
      <DockCell><ThunderbirdIcon /></DockCell>
      <DockCell dot><FilesIcon /></DockCell>
      <DockCell><RhythmboxIcon /></DockCell>
      <DockCell><WriterIcon /></DockCell>
      <DockCell><SoftwareIcon /></DockCell>
      <DockCell><TerminalIcon /></DockCell>
      <DockCell dot><SignalIcon /></DockCell>
      <div className="mb-0.5 mt-px h-px w-12 shrink-0 bg-[#c9c5c8]" />
      <DockCell dot><ChromeIcon /></DockCell>
      <DockCell dot><EditorIcon /></DockCell>
      <DockCell dot active><FirefoxIcon className="h-11 w-[42px]" /></DockCell>
      <DockCell><SsdIcon /></DockCell>
      <DockCell><TrashIcon /></DockCell>
      <div className="mb-[23px] mt-auto grid grid-cols-3 gap-1.5">
        {Array.from({ length: 9 }, (_, i) => (
          <span key={i} className="size-1.5 rounded-[2px] bg-white" />
        ))}
      </div>
    </nav>
  );
}

export default function App() {
  return (
    <div className="flex h-[1080px] w-[1920px] flex-col overflow-hidden bg-white font-['Noto_Sans',sans-serif]">
      <TopBar />
      <div className="flex min-h-0 flex-1">
        <Dock />
        <div className="flex min-w-0 flex-1 flex-col">
          <TabBar />
          <Toolbar />
          <SiteHeader />
          <main className="flex min-h-0 flex-1 items-start overflow-hidden pl-[340px] font-[Inter,sans-serif]">
            <Article />
            <Sidebar />
          </main>
          <FindBar />
        </div>
      </div>
    </div>
  );
}
